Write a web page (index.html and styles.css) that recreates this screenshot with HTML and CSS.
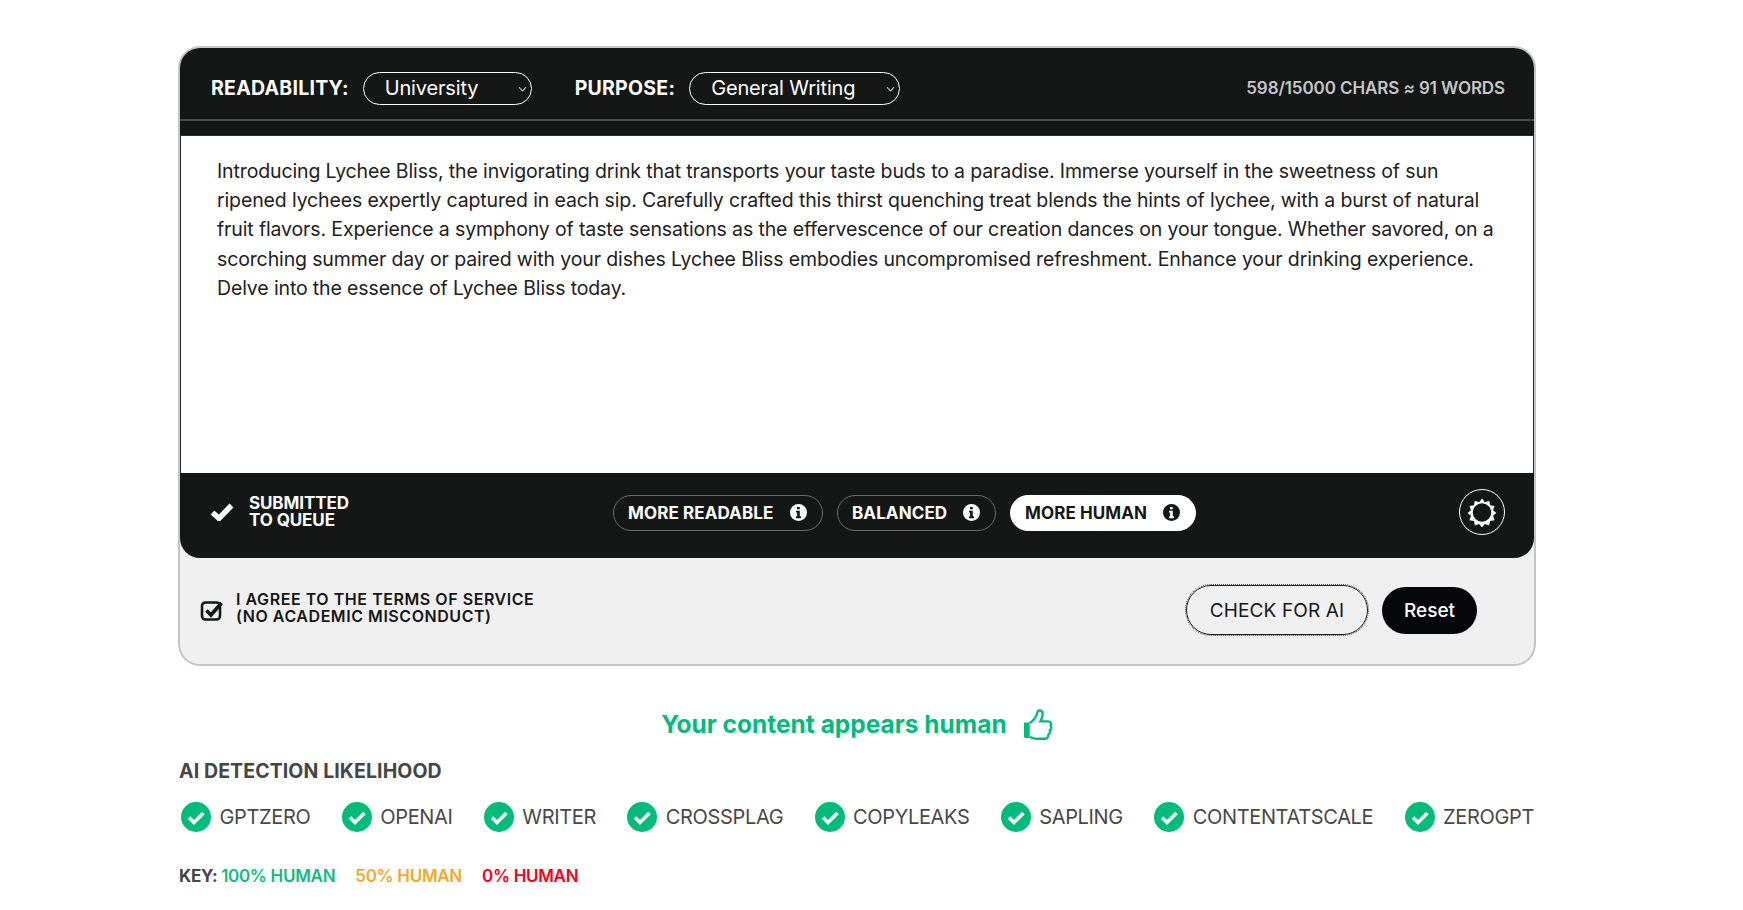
FILE: index.html
```html
<!DOCTYPE html>
<html lang="en">
<head>
<meta charset="utf-8">
<title>Humanizer</title>
<link rel="stylesheet" href="styles.css">
</head>
<body>
<main class="page">
  <section class="card">
    <div class="top-bar">
      <div class="top-row">
        <span class="field-label">READABILITY:</span>
        <span class="select select-a">University<svg class="chev" viewBox="0 0 10 6"><path d="M1 1l4 4 4-4"/></svg></span>
        <span class="field-label purpose">PURPOSE:</span>
        <span class="select select-b">General Writing<svg class="chev" viewBox="0 0 10 6"><path d="M1 1l4 4 4-4"/></svg></span>
        <span class="counter">598/15000 CHARS ≈ 91 WORDS</span>
      </div>
      <div class="top-rule"></div>
    </div>
    <div class="editor">
      <p class="line">Introducing Lychee Bliss, the invigorating drink that transports your taste buds to a paradise. Immerse yourself in the sweetness of sun</p>
      <p class="line">ripened lychees expertly captured in each sip. Carefully crafted this thirst quenching treat blends the hints of lychee, with a burst of natural</p>
      <p class="line">fruit flavors. Experience a symphony of taste sensations as the effervescence of our creation dances on your tongue. Whether savored, on a</p>
      <p class="line">scorching summer day or paired with your dishes Lychee Bliss embodies uncompromised refreshment. Enhance your drinking experience.</p>
      <p class="line">Delve into the essence of Lychee Bliss today.</p>
    </div>
    <div class="action-bar">
      <div class="status">
        <svg class="status-check" viewBox="0 0 24 18"><path d="M2.500 9.500l6.500 5.800L21.500 2.500"/></svg>
        <span class="status-text">SUBMITTED<br>TO QUEUE</span>
      </div>
      <div class="modes">
        <span class="mode mode-a">MORE READABLE<svg class="info" viewBox="0 0 16 16"><circle cx="8" cy="8" r="8"/><path class="info-i" d="M6.600 2.900h2.600v2.100H6.600zM5.700 6.300h3.500v5.200h1.100v1.800H5.700v-1.800h1V8.100H5.700z"/></svg></span>
        <span class="mode mode-b">BALANCED<svg class="info" viewBox="0 0 16 16"><circle cx="8" cy="8" r="8"/><path class="info-i" d="M6.600 2.900h2.600v2.100H6.600zM5.700 6.300h3.500v5.200h1.100v1.800H5.700v-1.800h1V8.100H5.700z"/></svg></span>
        <span class="mode mode-c active">MORE HUMAN<svg class="info" viewBox="0 0 16 16"><circle cx="8" cy="8" r="8"/><path class="info-i" d="M6.600 2.900h2.600v2.100H6.600zM5.700 6.300h3.500v5.200h1.100v1.800H5.700v-1.800h1V8.100H5.700z"/></svg></span>
      </div>
      <span class="gear-btn">
        <svg class="gear" viewBox="0 0 28 28">
          <path class="gear-teeth" d="M14 1.500l2.700 3.300 4-1.400.8 4.200 4.200.8-1.400 4 3.200 2.600-3.200 2.600 1.400 4-4.200.8-.8 4.200-4-1.400-2.700 3.300-2.700-3.300-4 1.400-.8-4.200-4.200-.8 1.400-4L.5 15l3.200-2.600-1.400-4 4.200-.8.800-4.200 4 1.400z"/>
          <circle class="gear-hole" cx="14" cy="14.500" r="8.600"/>
        </svg>
      </span>
    </div>
    <div class="footer">
      <label class="agree">
        <svg class="agree-box" viewBox="0 0 24 24"><rect class="agree-rect" x="2" y="4.500" width="18" height="17" rx="3.500"/><path class="agree-tick" d="M6.500 12.500l4.500 4.500L21.500 5"/></svg>
        <span class="agree-text">I AGREE TO THE TERMS OF SERVICE<br>(NO ACADEMIC MISCONDUCT)</span>
      </label>
      <div class="buttons">
        <span class="btn-check">CHECK FOR AI</span>
        <span class="btn-reset">Reset</span>
      </div>
    </div>
  </section>

  <h2 class="verdict">Your content appears human
    <svg class="thumb" viewBox="0 0 32 34"><path class="thumb-cuff" d="M2 15h6v16H3.500A1.500 1.500 0 0 1 2 29.500z"/><path class="thumb-line" d="M8 15.500c4-2.500 7-7 8-11.500.400-2 4.500-2.200 5.200 1 .7 2.800-.8 6.400-2.200 8.800h8c2.500 0 3.600 2.600 2.600 4.400 1 1.800.4 3.700-.9 4.800.6 1.900-.2 3.500-1.500 4.300.3 2.300-1 4.400-3.400 4.400H15c-2.800 0-4.800-1.400-7-1.700"/></svg>
  </h2>

  <h3 class="likelihood">AI DETECTION LIKELIHOOD</h3>
  <ul class="detectors">
    <li class="detector"><svg class="ok" viewBox="0 0 30 30"><circle cx="15" cy="15" r="15"/><path d="M8 15.500l5 5 9.500-9.500"/></svg>GPTZERO</li>
    <li class="detector"><svg class="ok" viewBox="0 0 30 30"><circle cx="15" cy="15" r="15"/><path d="M8 15.500l5 5 9.500-9.500"/></svg>OPENAI</li>
    <li class="detector"><svg class="ok" viewBox="0 0 30 30"><circle cx="15" cy="15" r="15"/><path d="M8 15.500l5 5 9.500-9.500"/></svg>WRITER</li>
    <li class="detector"><svg class="ok" viewBox="0 0 30 30"><circle cx="15" cy="15" r="15"/><path d="M8 15.500l5 5 9.500-9.500"/></svg>CROSSPLAG</li>
    <li class="detector"><svg class="ok" viewBox="0 0 30 30"><circle cx="15" cy="15" r="15"/><path d="M8 15.500l5 5 9.500-9.500"/></svg>COPYLEAKS</li>
    <li class="detector"><svg class="ok" viewBox="0 0 30 30"><circle cx="15" cy="15" r="15"/><path d="M8 15.500l5 5 9.500-9.500"/></svg>SAPLING</li>
    <li class="detector"><svg class="ok" viewBox="0 0 30 30"><circle cx="15" cy="15" r="15"/><path d="M8 15.500l5 5 9.500-9.500"/></svg>CONTENTATSCALE</li>
    <li class="detector"><svg class="ok" viewBox="0 0 30 30"><circle cx="15" cy="15" r="15"/><path d="M8 15.500l5 5 9.500-9.500"/></svg>ZEROGPT</li>
  </ul>
  <p class="key"><span class="key-label">KEY:</span> <span class="key-green">100% HUMAN</span><span class="key-amber">50% HUMAN</span><span class="key-red">0% HUMAN</span></p>
</main>
</body>
</html>
```
FILE: styles.css
```css
* { box-sizing: border-box; }
html, body { margin: 0; padding: 0; }
body { background: #fff; font-family: Inter, "Liberation Sans", sans-serif; color: #151716; overflow: hidden; }
.page { width: 1358px; margin-left: 178px; padding-top: 47px; }
.card { height: 620px; background: #f0f0f0; border: 2px solid #c4c4c4; border-top: 2px solid #c9c9c9; border-radius: 22px; overflow: hidden; display: flex; flex-direction: column; margin: -1px 0 0; }
.top-bar { height: 87px; background: #151716; color: #fff; flex: none; }
.top-row { height: 71px; display: flex; align-items: center; padding: 9px 29px 0 31px; }
.top-rule { height: 1.500px; background: #4b4c4b; }
.field-label { font-size: 19.500px; font-weight: 700; letter-spacing: 0.25px; }
.purpose { margin-left: 43px; }
.select { height: 33px; margin-left: 14px; border: 1.500px solid #fff; border-radius: 17px; padding-left: 21px; font-size: 20px; letter-spacing: -0.15px; display: flex; align-items: center; position: relative; }
.select-a { width: 169px; }
.select-b { width: 211px; }
.chev { position: absolute; right: 4px; top: 13px; width: 9px; height: 6px; fill: none; stroke: #bbb; stroke-width: 1.300; }
.counter { margin-left: auto; font-size: 17px; font-weight: 600; color: #c4c6c8; letter-spacing: -0.1px; }
.editor { flex: none; height: 338px; background: #fff; padding: 21px 36px 0; border: solid #2b2b2b; border-width: 1px 1px 0; }
.line { margin: 0; height: 29.200px; line-height: 29px; font-size: 19.500px; white-space: nowrap; letter-spacing: -0.13px; color: #212121; }
.action-bar { flex: none; height: 85px; background: #151716; border-radius: 0 0 20px 20px; display: flex; align-items: center; color: #fff; padding: 0 29px 6px 30px; position: relative; }
.status { display: flex; align-items: center; width: 403px; margin-bottom: 2px; }
.status-check { width: 24px; height: 18px; fill: none; stroke: #fff; stroke-width: 5.500; }
.status-text { margin-left: 15px; font-size: 17px; font-weight: 700; line-height: 17px; letter-spacing: -0.1px; }
.modes { display: flex; gap: 14px; }
.mode { height: 36px; border: 1.500px solid #6b6b6b; border-radius: 18px; display: flex; align-items: center; justify-content: space-between; padding: 0 15px 0 14px; font-size: 17px; font-weight: 700; letter-spacing: 0.1px; }
.mode-a { width: 210px; }
.mode-b { width: 159px; }
.mode-c { width: 186px; }
.mode.active { background: #fff; color: #151716; border-color: #fff; }
.info { width: 17px; height: 17px; fill: #fff; }
.info-i { fill: #151716; }
.active .info { fill: #151716; }
.active .info-i { fill: #fff; }
.gear-btn { margin-left: auto; margin-bottom: 2px; width: 46px; height: 46px; border: 1.500px solid #fff; border-radius: 50%; display: flex; align-items: center; justify-content: center; }
.gear { width: 30px; height: 30px; }
.gear-teeth { fill: #fff; }
.gear-hole { fill: #151716; }
.footer { flex: 1; display: flex; align-items: center; padding: 0 57px 2px 20px; }
.agree { display: flex; align-items: center; }
.agree-box { width: 24px; height: 24px; fill: none; stroke: #151716; }
.agree-rect { stroke-width: 2.600; }
.agree-tick { stroke-width: 3.600; }
.agree-text { margin-left: 12px; padding-bottom: 4px; font-size: 16px; font-weight: 600; line-height: 17px; letter-spacing: 0.55px; }
.buttons { margin-left: auto; display: flex; align-items: center; gap: 14px; }
.btn-check { height: 50px; width: 182px; border: 1.500px solid #1a1a1a; border-radius: 26px; outline: 1px dotted #555; display: flex; align-items: center; justify-content: center; font-size: 19px; letter-spacing: 0.15px; }
.btn-reset { height: 47px; width: 95px; background: #06070a; color: #fff; border-radius: 24px; display: flex; align-items: center; justify-content: center; font-size: 19px; font-weight: 500; }
.verdict { margin: 41px 0 0; display: flex; justify-content: center; align-items: center; gap: 15px; font-size: 24.500px; font-weight: 700; color: #00bc7a; letter-spacing: 0; height: 34px; }
.thumb { width: 31px; height: 33px; }
.thumb-cuff { fill: #00bc7a; }
.thumb-line { fill: none; stroke: #00bc7a; stroke-width: 2.400; }
.likelihood { margin: 16px 0 0; padding-left: 1px; font-size: 19.500px; font-weight: 700; color: #454545; letter-spacing: 0.1px; line-height: 28px; }
.detectors { list-style: none; margin: 17px 0 0; padding: 0 2px 0 3px; display: flex; justify-content: space-between; }
.detector { display: flex; align-items: center; gap: 8.500px; font-size: 20px; color: #484848; letter-spacing: -0.35px; height: 30px; }
.ok { width: 30px; height: 30px; fill: #00bc7a; }
.ok path { fill: none; stroke: #fff; stroke-width: 3.600; }
.key { margin: 32px 0 0; padding-left: 1px; font-size: 17px; font-weight: 700; line-height: 24px; letter-spacing: -0.3px; color: #454545; }
.key-green { color: #12bb80; font-weight: 600; }
.key-amber { color: #f0a92c; font-weight: 600; margin-left: 20px; }
.key-red { color: #f8001c; font-weight: 600; margin-left: 20px; }
```
